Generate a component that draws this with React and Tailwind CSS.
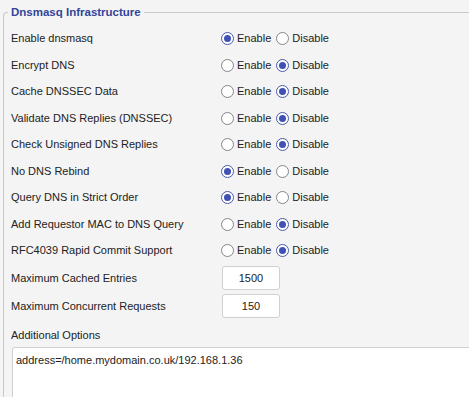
const rows = [
  { label: 'Enable dnsmasq', on: true },
  { label: 'Encrypt DNS', on: false },
  { label: 'Cache DNSSEC Data', on: false },
  { label: 'Validate DNS Replies (DNSSEC)', on: false },
  { label: 'Check Unsigned DNS Replies', on: false },
  { label: 'No DNS Rebind', on: true },
  { label: 'Query DNS in Strict Order', on: true },
  { label: 'Add Requestor MAC to DNS Query', on: false },
  { label: 'RFC4039 Rapid Commit Support', on: false },
]

function Radio({ checked }) {
  return (
    <span
      className={
        'flex h-[13px] w-[13px] items-center justify-center rounded-full border bg-white ' +
        (checked ? 'border-[#4a5aa8]' : 'border-[#858585]')
      }
    >
      {checked && <span className="h-[7px] w-[7px] rounded-full bg-[#3f51b5]" />}
    </span>
  )
}

function Toggle({ on }) {
  return (
    <div className="flex items-center">
      <Radio checked={on} />
      <span className="ml-[3px] mr-[5px]">Enable</span>
      <Radio checked={!on} />
      <span className="ml-[3px]">Disable</span>
    </div>
  )
}

export default function App() {
  return (
    <div
      className="h-[397px] w-[469px] overflow-hidden bg-[#f4f4f4] text-[11px] text-[#222]"
      style={{ fontFamily: '"Liberation Sans", Arial, sans-serif' }}
    >
      <fieldset className="ml-[3px] mt-[4px] w-[520px] rounded-tl-[4px] border-l border-t border-[#c8c8c8] pb-4 pl-[7px] pr-0 pt-[4px]">
        <legend className="-ml-[3px] px-[3px] text-[11.5px] font-bold text-[#33449a]">
          Dnsmasq Infrastructure
        </legend>
        {rows.map((r) => (
          <div key={r.label} className="flex h-[26.5px] items-center">
            <div className="w-[210px]">{r.label}</div>
            <Toggle on={r.on} />
          </div>
        ))}
        <div className="flex h-[28px] items-center">
          <div className="w-[211px]">Maximum Cached Entries</div>
          <div className="flex h-[24px] w-[58px] items-center justify-center rounded-[3px] border border-[#d0d0d0] bg-white">
            1500
          </div>
        </div>
        <div className="flex h-[28px] items-center">
          <div className="w-[211px]">Maximum Concurrent Requests</div>
          <div className="flex h-[24px] w-[58px] items-center justify-center rounded-[3px] border border-[#d0d0d0] bg-white">
            150
          </div>
        </div>
        <div className="mt-[7px] leading-[16px]">Additional Options</div>
        <div className="ml-[1px] mt-[4px] h-[80px] rounded-[3px] border border-[#cfcfcf] bg-white px-[3px] pt-[4px]">
          address=/home.mydomain.co.uk/192.168.1.36
        </div>
      </fieldset>
    </div>
  )
}
